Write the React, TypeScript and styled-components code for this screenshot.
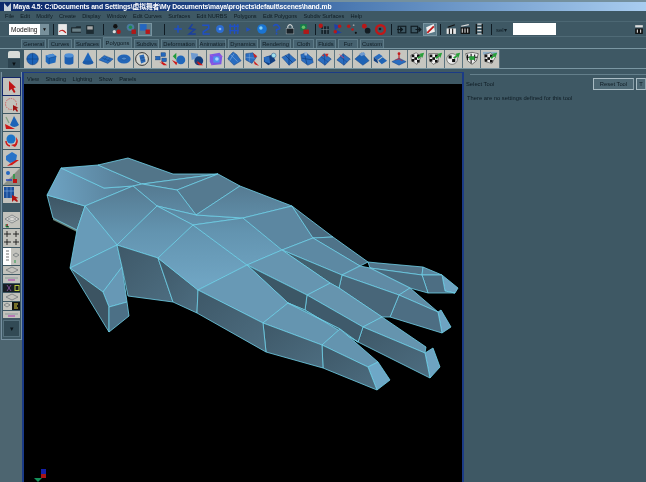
import React from "react";
import styled, { createGlobalStyle } from "styled-components";

const Global = createGlobalStyle`
  html, body { margin: 0; padding: 0; background: #3e5864; overflow: hidden; }
  * { box-sizing: border-box; }
`;
const Page = styled.div`
  width: 646px; height: 482px; display: flex; flex-direction: column; overflow: hidden;
  background: #3e5864; font-family: "Liberation Sans", "Noto Sans CJK SC", sans-serif; color: #0f1c24;
  filter: blur(0.25px);
`;
const TitleBar = styled.div`
  height: 11px; flex: none; border-top: 2px solid #74909e; display: flex; align-items: center; gap: 2px; padding-left: 4px;
  background: linear-gradient(90deg, #0d2a6b 0%, #1b3f80 30%, #4d7bb3 55%, #a9cdf0 100%);
`;
const TitleText = styled.span`
  font-size: 6.8px; font-weight: 700; color: #fff; line-height: 9px; white-space: nowrap; letter-spacing: -0.1px;
`;
const MenuBar = styled.div`
  height: 11px; flex: none; display: flex; align-items: center; gap: 6.3px; padding: 0 0 0 5px; border-bottom: 1px solid #4c6773;
`;
const MenuItem = styled.span`
  font-size: 5.6px; line-height: 8px; white-space: nowrap; color: #0f1c24;
`;
const ToolBar = styled.div`
  height: 15px; flex: none; display: flex; align-items: center; padding-left: 9px; border-bottom: 1px solid #4f6a76;
`;
const Select = styled.div`
  width: 40px; height: 11px; flex: none; background: #fff; display: flex; align-items: center; padding-left: 2px;
  font-size: 6.5px; color: #111; position: relative;
`;
const SelectLabel = styled.span`flex: 1;`;
const SelectArrow = styled.div`
  width: 9px; height: 11px; background: #77909b; display: flex; align-items: center; justify-content: center;
  color: #111; font-size: 5px;
`;
const Sep = styled.div<{ $m: number; $r: number }>`
  width: 1px; height: 11px; flex: none; background: #101c24; margin: 0 ${(p) => p.$r}px 0 ${(p) => p.$m}px;
`;
const Slot = styled.div<{ $on?: boolean }>`
  width: 14px; height: 13px; flex: none; display: flex; align-items: center; justify-content: center;
  background: ${(p) => (p.$on ? "#5b7a88" : "transparent")};
  box-shadow: ${(p) => (p.$on ? "inset 0 0 0 1px #7894a0" : "none")};
  svg { width: 12px; height: 12px; display: block; }
`;
const SelLabel = styled.span`
  font-size: 6px; color: #0f1c24; width: 17px; margin-left: 4px; flex: none;
`;
const SelInput = styled.div`
  width: 43px; height: 12px; background: #fff; flex: none;
`;
const Grow = styled.div`flex: 1;`;
const TabRow = styled.div`
  height: 11px; flex: none; display: flex; align-items: flex-end; padding-left: 21px; gap: 2px;
`;
const Tab = styled.div<{ $w: number; $on?: boolean }>`
  width: ${(p) => p.$w}px; height: ${(p) => (p.$on ? 11 : 9)}px; flex: none; display: flex; align-items: center; justify-content: center;
  font-size: 5.8px; color: #0f1c24; white-space: nowrap;
  background: ${(p) => (p.$on ? "#4f6c79" : "#466270")};
  border: 1px solid #5f7c89; border-bottom: none;
`;
const ShelfRow = styled.div`
  height: 21px; flex: none; display: flex; align-items: center; padding-left: 8px;
  border-top: 1px solid #7a96a2; border-bottom: 1px solid #7a96a2;
`;
const ShelfTabs = styled.div`
  width: 12px; height: 17px; flex: none; margin-right: 4px; margin-top: 2px; display: flex; flex-direction: column; gap: 1px;
`;
const ShelfTabTop = styled.div`height: 7px; background: #d8dcd8; border-radius: 2px 2px 0 0;`;
const ShelfTabBottom = styled.div`height: 9px; background: #2d4450; display: flex; align-items: center; justify-content: center; color: #0a1014; font-size: 6px;`;
const ShelfButton = styled.div`
  width: 18.3px; height: 18px; flex: none; background: #c6c6c0; border-right: 1px solid #5d7580; display: flex; align-items: center; justify-content: center;
  svg { width: 16px; height: 16px; display: block; }
`;
const Body = styled.div`
  flex: 1; min-height: 0; display: flex; margin-top: 3px;
`;
const Left = styled.div`
  width: 22px; flex: none; display: flex; flex-direction: column; background: #4d6570;
`;
const Tools = styled.div`
  background: #3e5864; padding: 6px 0 2px 1px; display: flex; flex-direction: column; height: 268px; border-right: 1px solid #7690a0;
  border-left: 1px solid #7690a0; border-bottom: 1px solid #7690a0; margin-left: 1px;
`;
const ToolBtn = styled.div<{ $on?: boolean; $h?: number; $mb?: number }>`
  width: 17px; height: ${(p) => p.$h ?? 17}px; margin-bottom: ${(p) => p.$mb ?? 1}px; flex: none; background: #c2c2bc;
  outline: ${(p) => (p.$on ? "1px solid #14286a" : "none")};
  svg { width: 100%; height: 100%; display: block; }
`;
const MoreBtn = styled.div`
  margin-top: auto; height: 17px; width: 17px; background: #324a55; border: 1px solid #55707c; color: #0b1419; font-size: 7px;
  display: flex; align-items: center; justify-content: center;
`;
const Viewport = styled.div`
  width: 442px; flex: none; display: flex; flex-direction: column; border-left: 2px solid #1b3b86; border-right: 2px solid #1b3b86;
  border-top: 1px solid #1b3b86;
`;
const PanelMenu = styled.div`
  height: 11px; flex: none; background: #3e5864; display: flex; align-items: center; gap: 6.5px; padding-left: 3px;
`;
const Canvas = styled.div`
  flex: 1; min-height: 0; background: #000;
  svg { display: block; width: 100%; height: 100%; }
`;
const Right = styled.div`
  flex: 1; min-width: 0; display: flex; flex-direction: column; padding: 2px 0 0 2px; overflow: hidden;
`;
const PanelRule = styled.div`height: 1px; background: #647f8b; margin-left: 4px;`;
const ToolHead = styled.div`
  display: flex; align-items: center; height: 12px; margin-top: 3px; white-space: nowrap;
`;
const ToolName = styled.span`font-size: 5.8px; flex: 1; color: #0f1c24;`;
const ResetBtn = styled.div<{ $w: number }>`
  width: ${(p) => p.$w}px; height: 12px; flex: none; margin-left: 2px; border: 1px solid #a9bcc4; border-right-color: #8aa0aa;
  font-size: 5.8px; color: #0f1c24; display: flex; align-items: center; justify-content: center; background: #4d6874; overflow: hidden;
`;
const Note = styled.div`font-size: 5.8px; margin-top: 5px; padding-left: 1px; color: #0f1c24; white-space: nowrap;`;

/* ---------- small drawings ---------- */
const RedArrow = () => <path d="M16 16 L9 11 L10 13.5 L7 12 L12 16 L10.5 16 Z" fill="#d01818" />;
const GreenArrow = () => <path d="M17 2 L12 3 L13 5 L9 7 L11 9 L14 6 L15 8 Z" fill="#28a038" />;
const Sheet = ({ c = "#2a6dc0" }: { c?: string }) => (
  <g>
    <polygon points="1,10 8,3 16,9 9,16" fill={c} stroke="#123f80" strokeWidth=".6" />
    <path d="M4.5 6.5 L12.5 12.5 M8 3 L9 16" stroke="#123f80" strokeWidth=".6" />
  </g>
);
const Checker = ({ v = 0 }: { v?: number }) => (
  <g>
    <polygon points={v === 0 ? "2,5 8,2 14,6 9,15 3,11" : v === 1 ? "2,3 12,3 13,12 7,15 3,11" : "3,4 10,2 15,7 11,14 4,12"} fill="#eee" stroke="#111" strokeWidth=".5" />
    <rect x="3" y="4" width="3" height="3" fill="#111" />
    <rect x="9" y="4" width="3" height="3" fill="#111" />
    <rect x="6" y="7" width="3" height="3" fill="#111" />
    <rect x="3" y="9" width="3" height="3" fill="#111" />
    <rect x="9" y="10" width="3" height="3" fill="#111" />
    <GreenArrow />
  </g>
);
const SHELF: React.ReactNode[] = [
  <g key="a"><circle cx="8.5" cy="9" r="6.5" fill="#1c63b8" stroke="#0e3a78" strokeWidth=".6" /><path d="M2 9H15M8.5 2.5V15.5" stroke="#0e3a78" strokeWidth=".6" /></g>,
  <g key="b"><polygon points="3,5 11,3 15,6 14,13 6,15 3,12" fill="#1f69bd" /><polygon points="3,5 11,3 15,6 7,8" fill="#4b8cd4" /><path d="M7 8V15M7 8L15 6" stroke="#0e3a78" strokeWidth=".5" fill="none" /></g>,
  <g key="c"><path d="M4 5 V13 A5 2.4 0 0 0 14 13 V5 Z" fill="#1c5fb2" /><ellipse cx="9" cy="5" rx="5" ry="2.4" fill="#4f8fd6" /></g>,
  <g key="d"><polygon points="9,1.5 15,13 3,13" fill="#1f66ba" /><ellipse cx="9" cy="13" rx="6" ry="2.4" fill="#1c5aa8" /></g>,
  <g key="e"><polygon points="1,10 7,5 17,9 11,14" fill="#2a6fc2" stroke="#123f80" strokeWidth=".5" /><path d="M4 7.5 L14 11.5 M7 10 L10 7 M10.5 11.5 L13.5 8" stroke="#123f80" strokeWidth=".5" /></g>,
  <g key="f"><ellipse cx="9" cy="9" rx="7.5" ry="5" fill="#2366b8" /><ellipse cx="9" cy="8.5" rx="3" ry="1.6" fill="#4f8bd0" stroke="#0e3a78" strokeWidth=".4" /></g>,
  <g key="g"><circle cx="9" cy="9" r="7.2" fill="#d6d6d0" stroke="#222" strokeWidth="1" /><polygon points="6,5 11,4 13,12 8,14" fill="#2a68b6" /><path d="M7 8L12 7M8 11L13 10" stroke="#103b78" strokeWidth=".5" /></g>,
  <g key="h"><rect x="9" y="2" width="5" height="4" fill="#2368bd" stroke="#0e3a78" strokeWidth=".5" /><rect x="3" y="6" width="5" height="4" fill="#2368bd" stroke="#0e3a78" strokeWidth=".5" /><rect x="10" y="8" width="5" height="4" fill="#2368bd" stroke="#0e3a78" strokeWidth=".5" /><RedArrow /></g>,
  <g key="i"><circle cx="11" cy="10" r="5" fill="#2067bb" /><path d="M6 2 L2 6 L6 10 Z" fill="#1f9a3a" /><path d="M1 10 L6 16 L7 13 Z" fill="#cc1818" /></g>,
  <g key="j"><polygon points="2,2 10,3 10,8 3,10" fill="#6f9ad0" /><circle cx="11" cy="11" r="5" fill="#123f7e" /><RedArrow /></g>,
  <g key="k"><polygon points="2,4 13,2 16,6 15,15 4,16 2,12" fill="#7b58e6" /><rect x="6" y="6" width="7" height="7" fill="#4e92ee" /><circle cx="10" cy="9" r="2" fill="#a8d2ff" /><path d="M2 4L6 6M16 6L13 6M4 16L6 13" stroke="#c84ad0" strokeWidth=".6" /></g>,
  <g key="l"><polygon points="8,1 12,4 17,11 9,16 2,9 4,5" fill="#2a6dc0" stroke="#123f80" strokeWidth=".5" /><path d="M5 4L13 12M9 3L4 11" stroke="#8fb6e2" strokeWidth=".6" /></g>,
  <g key="m"><polygon points="2,3 10,2 14,7 9,14 2,10" fill="#2a6dc0" stroke="#123f80" strokeWidth=".5" /><path d="M6 3L6 12M2 7L12 8" stroke="#8fb6e2" strokeWidth=".5" /><path d="M10 2 L15 6 L12 8 Z" fill="#cc2222" /><path d="M17 17 L11 11 L12 15 Z" fill="#d01818" /></g>,
  <g key="n"><polygon points="1,7 11,4 14,11 6,16 1,12" fill="#123f80" /><polygon points="1,7 7,6 8,14 2,12" fill="#2a6dc0" /><circle cx="12" cy="5" r="2.6" fill="#9ee0ee" stroke="#123f80" strokeWidth=".5" /></g>,
  <g key="o"><polygon points="1,7 9,3 17,10 9,16" fill="#2a6dc0" stroke="#123f80" strokeWidth=".5" /><path d="M5 5 L13 13 M9 3 L9 16" stroke="#0e3a78" strokeWidth=".8" /></g>,
  <g key="p"><polygon points="2,4 8,2 15,8 16,13 10,16 3,11" fill="#2a6dc0" stroke="#123f80" strokeWidth=".5" /><path d="M6 3L9 15M3 8L15 10" stroke="#123f80" strokeWidth=".8" /><path d="M6 1 L9 1 L9 5 L6 5 Z" fill="#9fb8d8" /></g>,
  <g key="q"><Sheet /><path d="M9 3 L13 3 L11 7 Z" fill="#d02a2a" /><circle cx="7" cy="5" r="1" fill="#d02a2a" /></g>,
  <g key="r"><Sheet /><path d="M4 4 L9 8" stroke="#d23c6a" strokeWidth="1" /></g>,
  <g key="s"><polygon points="1,9 9,2 17,11 10,16" fill="#1f63b4" stroke="#123f80" strokeWidth=".5" /><polygon points="6,3 11,1 13,4 8,6" fill="#6f9ad0" /></g>,
  <g key="t"><polygon points="2,7 8,3 12,6 6,10" fill="#2a6dc0" /><polygon points="7,11 12,7 17,11 11,15" fill="#1f63b4" /><polygon points="2,7 6,10 7,14 2,11" fill="#123f80" /></g>,
  <g key="u"><polygon points="1,12 9,8 17,12 9,16" fill="#2a6dc0" stroke="#123f80" strokeWidth=".5" /><path d="M9 3V9" stroke="#c41a1a" strokeWidth="1.2" /><circle cx="9" cy="3" r="1.6" fill="#c41a1a" /><path d="M5 10L9 9L13 11" stroke="#d02a2a" strokeWidth=".8" fill="none" /></g>,
  <g key="v"><Checker v={0} /></g>,
  <g key="w"><Checker v={1} /></g>,
  <g key="x"><circle cx="8" cy="9" r="6" fill="#eee" stroke="#111" strokeWidth=".5" /><rect x="4" y="5" width="3.5" height="3.5" fill="#111" /><rect x="8" y="9" width="3.5" height="3.5" fill="#111" /><GreenArrow /></g>,
  <g key="y"><path d="M2 3 Q9 0 16 3 L14 11 L9 15 L4 11 Z" fill="#eee" stroke="#111" strokeWidth=".6" /><path d="M4 4V10M8 3V14M12 4V11M3 7H15" stroke="#111" strokeWidth="1.2" /><rect x="6" y="6" width="6" height="4" fill="#25a03a" /></g>,
  <g key="z"><rect x="1" y="1" width="16" height="3" fill="#8fb0c8" /><Checker v={2} /></g>,
];

const B = "#2466c0";
const TB: Record<string, React.ReactNode> = {
  doc: <g><rect x="2" y="1" width="8" height="10" fill="#e8e8e8" /><path d="M3 8 Q6 5 9 9" stroke="#c01c1c" fill="none" /></g>,
  folder: <g><path d="M1 4H5L6 3H10V9H1Z" fill="#1e2a30" /><path d="M2 5H10V8H2Z" fill="#6a8088" /></g>,
  disk: <g><rect x="2" y="2" width="7" height="8" fill="#1d2c33" /><rect x="3" y="3" width="5" height="3" fill="#a8a8a8" /></g>,
  dots: <g><circle cx="4" cy="3" r="2" fill="#111" /><circle cx="7" cy="8" r="2" fill="#b01818" /><circle cx="3" cy="8" r="1.5" fill="#ddd" /></g>,
  globe: <g><circle cx="5" cy="4" r="3.4" fill="#4a7a9e" /><circle cx="5" cy="4" r="1.6" fill="#1f8a4a" /><rect x="6" y="6" width="4" height="4" fill="#b01818" /></g>,
  blueRed: <g><rect x="1" y="1" width="6" height="6" fill={B} /><rect x="6" y="6" width="4" height="4" fill="#b81818" /></g>,
  plus: <path d="M5.5 2V9M2 5.5H9" stroke="#1f4fc4" strokeWidth="1.4" />,
  swirl: <path d="M6 1L3 5L8 6L3 10H9" stroke="#1a3fa0" strokeWidth="1.4" fill="none" />,
  two: <path d="M2 2H8V5L3 8V10H9" stroke="#1f4fc4" strokeWidth="1.4" fill="none" />,
  diamond: <g><circle cx="5.5" cy="5.5" r="3.6" fill="#2c6cd0" /><circle cx="5.5" cy="5.5" r="1.2" fill="#86b6ee" /></g>,
  gridb: <path d="M2 1V10M6 1V10M9 1V10M1 3H10M1 7H10" stroke="#1f4fc4" strokeWidth="1.2" />,
  small: <path d="M4 4L8 6L4 8Z" fill="#1f4fc4" />,
  orb: <g><circle cx="5.5" cy="5.5" r="4.4" fill="#1a74d2" /><circle cx="4.5" cy="4.5" r="1.6" fill="#7fd0f8" /></g>,
  q: <path d="M3 3Q5.5 0 8 3T6 6V8M6 9V10.5" stroke="#1f4fc4" strokeWidth="1.4" fill="none" />,
  lock: <g><path d="M3.5 5V3Q5.5 0 7.5 3V5" stroke="#d0d4d4" fill="none" /><rect x="2" y="5" width="7" height="5" fill="#1a2228" stroke="#9aa6aa" strokeWidth=".5" /></g>,
  greenRed: <g><rect x="2" y="1" width="6" height="6" fill="#167a4a" /><circle cx="5" cy="4" r="1.6" fill="#67c067" /><rect x="5" y="6" width="5" height="4" fill="#b01818" /></g>,
  gridr: <g><rect x="3" y="3" width="7" height="7" fill="#16242c" /><path d="M5 3V10M8 3V10M3 6H10" stroke="#748892" strokeWidth=".5" /><circle cx="2.5" cy="2.5" r="2" fill="#b81818" /></g>,
  br2: <g><path d="M2 1L8 3L3 6L9 9L3 10Z" fill="#1f3fa8" /><circle cx="7" cy="3" r="1.6" fill="#b81818" /><circle cx="3" cy="8" r="1.6" fill="#b81818" /></g>,
  rd: <g><circle cx="2.5" cy="3" r="1.6" fill="#b81818" /><circle cx="6" cy="6" r="1.2" fill="#b81818" /><circle cx="9" cy="9" r="1" fill="#111" /><circle cx="7" cy="2" r=".8" fill="#999" /></g>,
  rc: <g><circle cx="4" cy="3" r="2.2" fill="#b81818" /><circle cx="7" cy="7" r="2.6" fill="#131c22" /></g>,
  rs: <g><circle cx="6" cy="6" r="4" fill="none" stroke="#c01818" strokeWidth="2.2" /><circle cx="5.5" cy="5.5" r="1.2" fill="#152026" /></g>,
  boxL: <g><rect x="2" y="3" width="7" height="6" fill="none" stroke="#0f1a20" strokeWidth="1" /><path d="M1 6H6M4 4L6 6L4 8" stroke="#0f1a20" /></g>,
  boxR: <g><rect x="1" y="3" width="6" height="6" fill="none" stroke="#0f1a20" strokeWidth="1" /><path d="M5 6H10M8 4L10 6L8 8" stroke="#0f1a20" /></g>,
  render: <g><polygon points="2,4 9,1 10,8 3,10" fill="#eee" /><path d="M3 9L9 3" stroke="#c01818" strokeWidth="1.6" /></g>,
  clap: <g><rect x="1.5" y="5" width="8.5" height="5" fill="#e6e6e6" /><path d="M2.5 4L9 1.5M4 5V10M7 5V10" stroke="#111" strokeWidth="1" /></g>,
  clap2: <g><rect x="1.5" y="4" width="8.5" height="6" fill="#111" /><path d="M3 5V9M5.5 5V9M8 5V9" stroke="#ddd" strokeWidth="1" /><path d="M2 3L9 1.5" stroke="#ddd" /></g>,
  clap3: <g><path d="M4 1H8M4 4H8M4 7H8M4 10H8" stroke="#ddd" strokeWidth="1" /><path d="M3 1V10M8.5 1V10" stroke="#111" strokeWidth="1.1" /></g>,
  disk2: <g><rect x="2" y="2" width="7" height="2" fill="#ddd" /><rect x="2" y="5" width="7" height="5" fill="#111" /><path d="M4 6V9M7 6V9" stroke="#ddd" /></g>,
};
const TIcon = ({ n, on }: { n: string; on?: boolean }) => (
  <Slot $on={on}><svg viewBox="0 0 11 11">{TB[n]}</svg></Slot>
);

const TOOLS: { h: number; mb?: number; on?: boolean; art: React.ReactNode }[] = [
  { h: 17, on: true, art: <path d="M6 3 L6 13 L8.5 11 L11 15 L12.5 14 L10.5 10 L13 9.5 Z" fill="#c01414" /> },
  { h: 17, art: <g><circle cx="8" cy="8" r="5.5" fill="none" stroke="#d04a4a" strokeWidth=".8" strokeDasharray="1.5 1" /><path d="M10 9 L10 15 L12 13.5 L14 16 L15 15 L13.5 12.5 L15.5 12 Z" fill="#a01414" /></g> },
  { h: 17, art: <g><path d="M11 2 L16 11 Q11 15 7 11 Z" fill="#1c63b8" /><path d="M3 3L6 9" stroke="#80a080" strokeWidth="1.2" /><path d="M2 10 L12 15 L3 15 Z" fill="#cc1818" /></g> },
  { h: 17, art: <g><circle cx="8" cy="7" r="4.5" fill="#1c74c8" /><path d="M13 5 Q17 10 12 15 L8 13 L12 12 Q14 9 13 5Z" fill="#d01818" /><path d="M3 9 Q3 13 7 14" stroke="#d01818" strokeWidth="1.5" fill="none" /></g> },
  { h: 17, art: <g><polygon points="3,6 9,2 14,5 13,11 7,13 3,10" fill="#2a74c8" /><path d="M16 10 L9 15 L4 16 L8 13 L13 10Z" fill="#d01818" /></g> },
  { h: 17, art: <g><polygon points="0,17 17,0 17,17" fill="#8a9086" /><circle cx="5" cy="5" r="2" fill="#2466c0" /><path d="M9 12H3" stroke="#1c3cc0" strokeWidth="1.4" /><path d="M11 12V6" stroke="#1c9a3a" strokeWidth="1.4" /><rect x="10" y="11" width="4" height="4" fill="#c01414" /></g> },
  { h: 17, mb: 9, art: <g><rect x="1" y="1" width="10" height="11" fill="#1c4f9a" /><path d="M4 1V12M8 1V12M1 5H11" stroke="#7fb4ea" strokeWidth=".6" /><path d="M9 9 L9 16 L11 14 L14 16 L15 15 L13 12.5 L15.5 12 Z" fill="#b01414" /></g> },
  { h: 16, art: <g><polygon points="2,7 9,3 16,7 9,11" fill="#d8d8d4" stroke="#6a7074" strokeWidth=".7" /><polygon points="5,7 9,5 13,7 9,9" fill="none" stroke="#6a7074" strokeWidth=".5" /><path d="M3 12V15H6" stroke="#2a9a4a" /><path d="M3 14L5 12" stroke="#c03030" /></g> },
  { h: 18, art: <g><path d="M4 2V8M1 5H8M13 2V8M10 5H16M4 10V16M1 13H8M13 10V16M10 13H16" stroke="#1a1a1a" strokeWidth=".9" /></g> },
  { h: 17, art: <g><rect x="0" y="0" width="8" height="17" fill="#fff" /><path d="M3 3H6M3 6H6M3 9H6M3 12H6" stroke="#333" strokeWidth=".7" /><polygon points="10,7 13,5 16,7 13,9" fill="none" stroke="#6a7074" strokeWidth=".7" /><path d="M12 12V15" stroke="#2a9a4a" /></g> },
  { h: 8, art: <g><polygon points="3,4 9,1 15,4 9,7" fill="none" stroke="#6a7074" strokeWidth=".7" /></g> },
  { h: 8, art: <g><path d="M2 3H15" stroke="#8a9a9a" /><path d="M5 5H12" stroke="#b04ab0" strokeWidth="1.2" /></g> },
  { h: 8, art: <g><rect width="17" height="8" fill="#161d22" /><rect x="12" y="1.5" width="4" height="5" fill="none" stroke="#b8c840" /><path d="M4 1L8 7M8 1L4 7" stroke="#7a4a90" /></g> },
  { h: 8, art: <polygon points="3,4 9,1 15,4 9,7" fill="none" stroke="#6a7074" strokeWidth=".7" /> },
  { h: 8, art: <g><rect x="9" width="8" height="8" fill="#111" /><path d="M11 2H15M11 4H14M11 6H15" stroke="#e0d040" /><polygon points="1,3 4,1 7,3 4,5" fill="none" stroke="#6a7074" strokeWidth=".7" /></g> },
  { h: 7, art: <g><path d="M2 3H15" stroke="#8a9a9a" /><path d="M5 5H12" stroke="#b04ab0" strokeWidth="1.2" /></g> },
];

/* ---------- hand mesh ---------- */
type F = { p: number[]; f: string };
const T = "url(#top)", D = "url(#dark)", LFT = "url(#leftTop)", K = "url(#side)";
const FACES: F[] = [
  { p: [47,195, 85,206, 77,230, 53,218], f: D },
  { p: [61,168, 104,188, 133,186, 85,206, 47,195], f: LFT },
  { p: [61,168, 98,165, 142,184, 133,186, 104,188], f: LFT },
  { p: [98,165, 128,158, 173,174, 218,174, 142,184], f: "#527589" },
  { p: [142,184, 218,174, 177,190], f: "#55798f" },
  { p: [218,174, 240,186, 196,215, 177,190], f: "#557a90" },
  { p: [133,186, 142,184, 177,190, 196,215, 157,206], f: T },
  { p: [85,206, 133,186, 157,206, 117,245], f: T },
  { p: [157,206, 196,215, 243,218, 193,225], f: T },
  { p: [117,245, 157,206, 193,225, 158,258], f: T },
  { p: [85,206, 117,245, 70,268, 77,230], f: "#689bb8" },
  { p: [70,268, 117,245, 122,267, 103,292], f: "#6293b0" },
  { p: [103,292, 122,267, 127,302, 109,307], f: "#6798b5" },
  { p: [117,245, 158,258, 173,302, 128,296, 122,267], f: K },
  { p: [158,258, 198,290, 197,313, 173,302], f: K },
  { p: [70,268, 103,292, 109,307, 109,332], f: "#3c5462" },
  { p: [109,307, 127,302, 129,316, 109,332], f: "#4c7086" },
  { p: [158,258, 193,225, 247,265, 198,290], f: T },
  { p: [240,186, 292,206, 243,218, 196,215], f: T },
  { p: [193,225, 243,218, 282,250, 247,265], f: T },
  { p: [243,218, 292,206, 313,238, 282,250], f: "#5c87a1" },
  { p: [292,206, 333,237, 313,238], f: "#4a6b80" },
  { p: [313,238, 333,237, 368,262, 360,266], f: "#4f7389" },
  { p: [282,250, 313,238, 360,266, 342,275], f: "#5d89a3" },
  { p: [368,262, 378,263, 423,267, 422,275, 370,268], f: "#527489" },
  { p: [423,267, 442,275, 422,275], f: "#5b859e" },
  { p: [442,275, 458,288, 455,293, 445,291], f: "#6ea3c1" },
  { p: [422,275, 442,275, 445,291, 455,293, 428,293], f: "#4d6e83" },
  { p: [370,268, 422,275, 428,293, 410,288], f: "#496a7e" },
  { p: [360,266, 370,268, 410,288, 399,295, 342,275], f: "#608ba5" },
  { p: [410,288, 438,312, 399,295], f: "#618ca5" },
  { p: [438,312, 441,310, 451,327, 442,333], f: "#6ea3c1" },
  { p: [399,295, 438,312, 442,333, 390,317], f: "#4d6e83" },
  { p: [342,275, 399,295, 390,317, 382,317, 339,288], f: "#486679" },
  { p: [282,250, 342,275, 339,288, 330,283], f: "#42606f" },
  { p: [330,283, 339,288, 382,317, 363,327, 307,295], f: "#6694ae" },
  { p: [382,317, 426,347, 425,353, 363,327], f: "#6594ae" },
  { p: [425,353, 433,348, 440,367, 430,378], f: "#6ea3c1" },
  { p: [363,327, 425,353, 430,378, 358,342], f: K },
  { p: [307,295, 363,327, 358,342, 305,310], f: "#3f5a6b" },
  { p: [247,265, 282,250, 330,283, 307,295], f: "#6695b0" },
  { p: [247,265, 307,295, 305,310, 288,303], f: "#3c5766" },
  { p: [198,290, 247,265, 288,303, 263,323], f: "#6899b5" },
  { p: [263,323, 288,303, 340,329, 322,345], f: "#6595b0" },
  { p: [288,303, 305,310, 358,342, 340,329], f: "#3f5a6b" },
  { p: [340,329, 378,362, 368,367, 322,345], f: "#6494af" },
  { p: [378,362, 390,380, 377,390, 368,367], f: "#6ea7c6" },
  { p: [322,345, 368,367, 377,390, 323,368], f: K },
  { p: [263,323, 322,345, 323,368, 266,352], f: K },
  { p: [198,290, 263,323, 266,352, 197,313], f: K },
];
const pts = (a: number[]) => a.map((v, i) => (i % 2 ? `${v} ` : `${v},`)).join("");

const Hand = () => (
  <svg viewBox="24 84 438 398" preserveAspectRatio="none">
    <defs>
      <linearGradient id="dark" x1="0" y1="0" x2="0" y2="1"><stop offset="0" stopColor="#3d5665" /><stop offset="1" stopColor="#4c6a7c" /></linearGradient>
      <linearGradient id="side" x1="0" y1="0" x2="1" y2="1"><stop offset="0" stopColor="#3e5868" /><stop offset="1" stopColor="#4d6d80" /></linearGradient>
      <linearGradient id="top" gradientUnits="userSpaceOnUse" x1="0" y1="185" x2="0" y2="280">
        <stop offset="0" stopColor="#557a91" /><stop offset=".5" stopColor="#6394b0" /><stop offset="1" stopColor="#6fa4c2" />
      </linearGradient>
      <linearGradient id="leftTop" gradientUnits="userSpaceOnUse" x1="55" y1="185" x2="140" y2="175">
        <stop offset="0" stopColor="#6ca0bf" /><stop offset="1" stopColor="#537890" />
      </linearGradient>
    </defs>
    <path d="M53 218 L77 228 L77 232 L53 220Z" fill="#cfe" opacity=".5" />
    {FACES.map((f, i) => (
      <polygon key={i} points={pts(f.p)} fill={f.f} stroke="#70d0e8" strokeWidth=".8" strokeLinejoin="round" />
    ))}
    <rect x="41" y="469" width="5" height="5" fill="#1420a8" />
    <rect x="41" y="474" width="5" height="4" fill="#a81414" />
    <path d="M34 478 L42 478 L38 482 Z" fill="#14905a" />
  </svg>
);

const MENUS = ["File","Edit","Modify","Create","Display","Window","Edit Curves","Surfaces","Edit NURBS","Polygons","Edit Polygons","Subdiv Surfaces","Help"];
const TABS: [string, number, boolean?][] = [["General",25],["Curves",24],["Surfaces",27],["Polygons",29,true],["Subdivs",25],["Deformation",36],["Animation",27],["Dynamics",30],["Rendering",31],["Cloth",21],["Fluids",20],["Fur",20],["Custom",24]];

export default function App() {
  return (
    <Page>
      <Global />
      <TitleBar>
        <svg width="7" height="8" viewBox="0 0 7 8"><path d="M0 8V0L3.5 4L7 0V8" fill="#c6d0d8" /></svg>
        <TitleText>Maya 4.5: C:\Documents and Settings\虚拟舞者\My Documents\maya\projects\default\scenes\hand.mb</TitleText>
      </TitleBar>
      <MenuBar>{MENUS.map((m) => <MenuItem key={m}>{m}</MenuItem>)}</MenuBar>
      <ToolBar>
        <Select><SelectLabel>Modeling</SelectLabel><SelectArrow>▼</SelectArrow></Select>
        <Sep $m={4} $r={1} />
        <TIcon n="doc" /><TIcon n="folder" /><TIcon n="disk" />
        <Sep $m={6} $r={6} />
        <TIcon n="dots" /><TIcon n="globe" /><TIcon n="blueRed" on />
        <Sep $m={12} $r={6} />
        <TIcon n="plus" /><TIcon n="swirl" /><TIcon n="two" /><TIcon n="diamond" /><TIcon n="gridb" /><TIcon n="small" /><TIcon n="orb" /><TIcon n="q" />
        <TIcon n="lock" /><TIcon n="greenRed" />
        <Sep $m={4} $r={1} />
        <TIcon n="gridr" /><TIcon n="br2" /><TIcon n="rd" /><TIcon n="rc" /><TIcon n="rs" />
        <Sep $m={4} $r={3} />
        <TIcon n="boxL" /><TIcon n="boxR" /><TIcon n="render" on />
        <Sep $m={3} $r={3} />
        <TIcon n="clap" /><TIcon n="clap2" /><TIcon n="clap3" />
        <Sep $m={5} $r={0} />
        <SelLabel>sel▾</SelLabel>
        <SelInput />
        <Grow />
        <TIcon n="disk2" />
      </ToolBar>
      <TabRow>{TABS.map(([t, w, on]) => <Tab key={t} $w={w} $on={on}>{t}</Tab>)}</TabRow>
      <ShelfRow>
        <ShelfTabs><ShelfTabTop /><ShelfTabBottom>▼</ShelfTabBottom></ShelfTabs>
        {SHELF.map((s, i) => <ShelfButton key={i}><svg viewBox="0 0 18 18">{s}</svg></ShelfButton>)}
      </ShelfRow>
      <Body>
        <Left>
          <Tools>
            {TOOLS.map((t, i) => (
              <ToolBtn key={i} $on={t.on} $h={t.h} $mb={t.mb}>
                <svg viewBox={`0 0 17 ${t.h}`}>{t.art}</svg>
              </ToolBtn>
            ))}
            <MoreBtn>▾</MoreBtn>
          </Tools>
        </Left>
        <Viewport>
          <PanelMenu>{["View","Shading","Lighting","Show","Panels"].map((m) => <MenuItem key={m}>{m}</MenuItem>)}</PanelMenu>
          <Canvas><Hand /></Canvas>
        </Viewport>
        <Right>
          <PanelRule />
          <ToolHead>
            <ToolName>Select Tool</ToolName>
            <ResetBtn $w={41}>Reset Tool</ResetBtn>
            <ResetBtn $w={10}>T</ResetBtn>
          </ToolHead>
          <Note>There are no settings defined for this tool</Note>
        </Right>
      </Body>
    </Page>
  );
}
